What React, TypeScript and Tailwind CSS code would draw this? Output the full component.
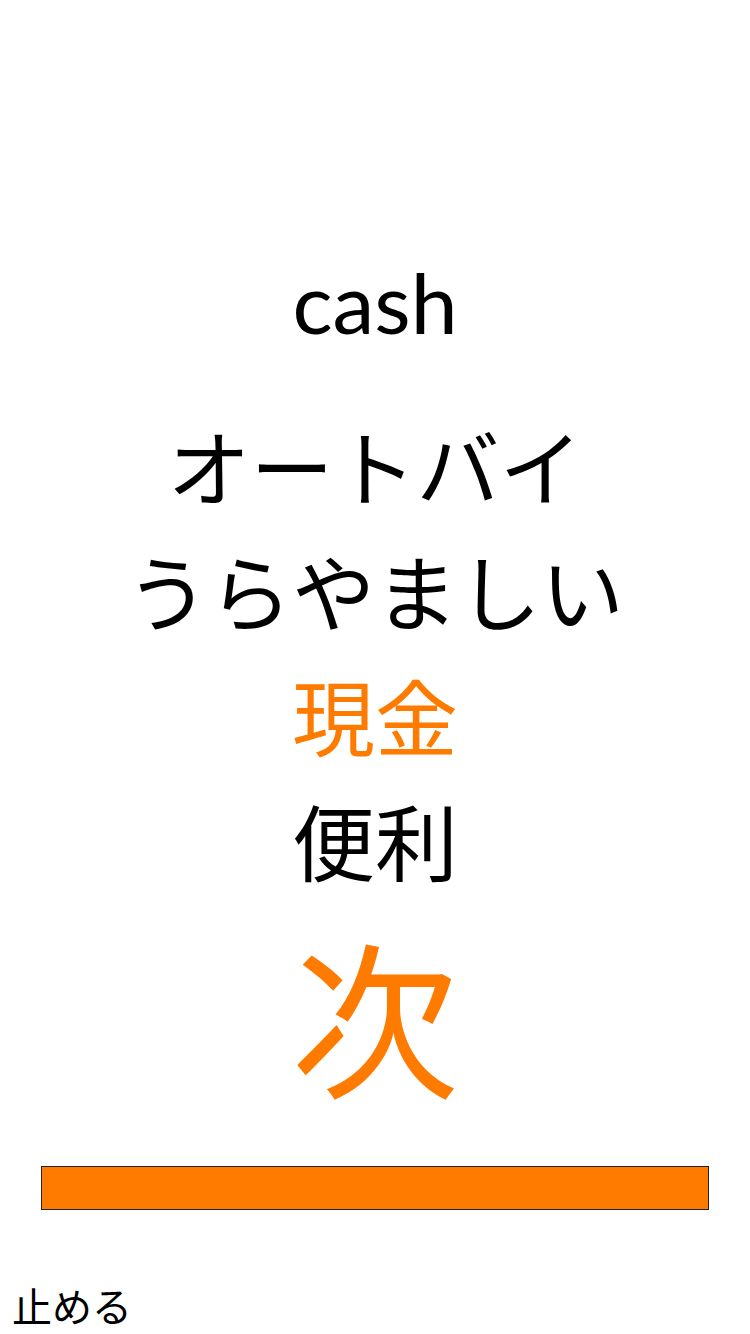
export default function App() {
  const words = [
    { text: 'オートバイ', active: false },
    { text: 'うらやましい', active: false },
    { text: '現金', active: true },
    { text: '便利', active: false },
  ]

  return (
    <div className="w-[750px] h-[1334px] bg-white flex flex-col overflow-hidden text-black font-['Noto_Sans_CJK_JP',sans-serif]">
      {/* Prompt word */}
      <div className="pt-[247px] h-[357px] text-center text-[84px] leading-[110px] font-['Lato','Noto_Sans_CJK_JP',sans-serif]">
        cash
      </div>

      {/* Choices */}
      <div className="mt-[45px] flex flex-col items-center">
        {words.map((w) => (
          <div
            key={w.text}
            className={`h-[125px] text-[83px] leading-[125px] ${w.active ? 'text-[#ff7b00]' : 'text-black'}`}
          >
            {w.text}
          </div>
        ))}
      </div>

      {/* Next button */}
      <div className="mt-[16px] h-[190px] text-center text-[168px] leading-[190px] text-[#ff7b00]">
        次
      </div>

      {/* Timer bar */}
      <div className="mt-[58px] mx-[41px] h-[44px] bg-[#ff7b00] border border-[#222]" />

      {/* Stop */}
      <div className="mt-[70px] pl-[12px] text-[40px] leading-[50px]">止める</div>
    </div>
  )
}
